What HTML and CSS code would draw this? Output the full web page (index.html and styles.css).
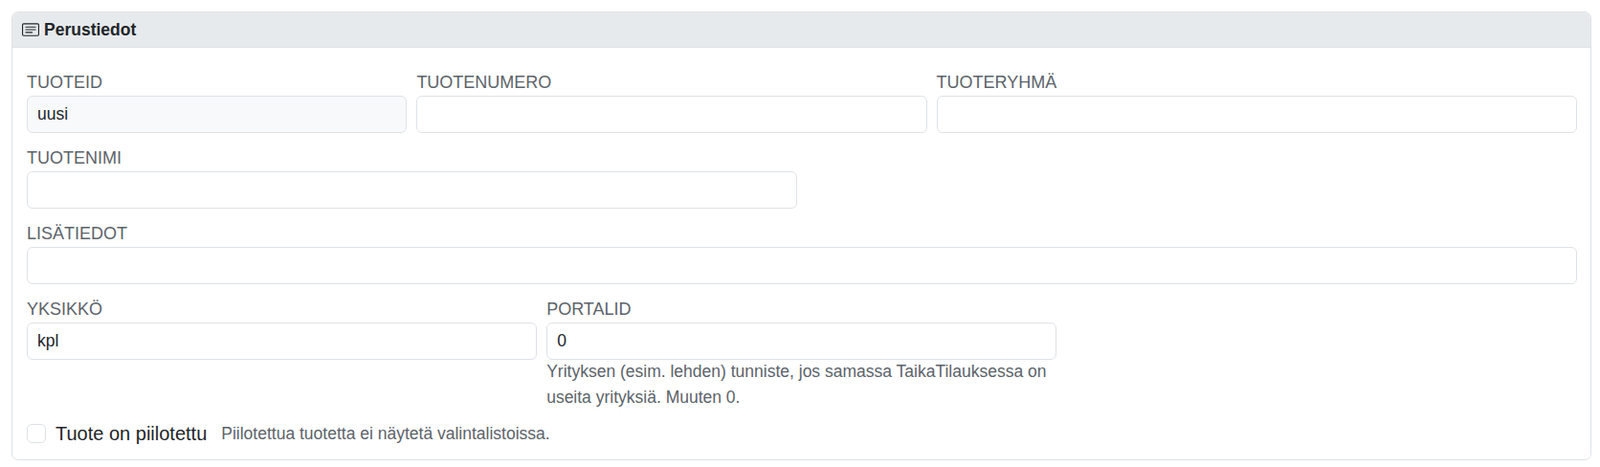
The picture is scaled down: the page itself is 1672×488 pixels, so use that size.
FILE: index.html
```html
<!DOCTYPE html>
<html lang="fi">
<head>
    <meta charset="UTF-8">
    <title>Perustiedot</title>
    <link rel="stylesheet" href="styles.css">
</head>
<body>
    <div class="card">
        <div class="card-header">
            <svg class="card-icon" viewBox="0 0 16 16" fill="currentColor">
                <path d="M14.5 3a.5.5 0 0 1 .5.5v9a.5.5 0 0 1-.5.5h-13a.5.5 0 0 1-.5-.5v-9a.5.5 0 0 1 .5-.5zm-13-1A1.5 1.5 0 0 0 0 3.5v9A1.5 1.5 0 0 0 1.5 14h13a1.5 1.5 0 0 0 1.5-1.5v-9A1.5 1.5 0 0 0 14.5 2z"/>
                <path d="M3 5.5a.5.5 0 0 1 .5-.5h9a.5.5 0 0 1 0 1h-9a.5.5 0 0 1-.5-.5M3 8a.5.5 0 0 1 .5-.5h9a.5.5 0 0 1 0 1h-9A.5.5 0 0 1 3 8m0 2.5a.5.5 0 0 1 .5-.5h6a.5.5 0 0 1 0 1h-6a.5.5 0 0 1-.5-.5"/>
            </svg>
            <span>Perustiedot</span>
        </div>
        <div class="card-body">
            <div class="form-row">
                <div class="field col-3">
                    <label class="field-label">TUOTEID</label>
                    <input class="field-input readonly" type="text" value="uusi" readonly>
                </div>
                <div class="field col-4">
                    <label class="field-label">TUOTENUMERO</label>
                    <input class="field-input" type="text">
                </div>
                <div class="field col-5">
                    <label class="field-label">TUOTERYHMÄ</label>
                    <input class="field-input" type="text">
                </div>
            </div>
            <div class="form-row">
                <div class="field col-6">
                    <label class="field-label">TUOTENIMI</label>
                    <input class="field-input" type="text">
                </div>
            </div>
            <div class="form-row">
                <div class="field col-12">
                    <label class="field-label">LISÄTIEDOT</label>
                    <input class="field-input" type="text">
                </div>
            </div>
            <div class="form-row">
                <div class="field col-4">
                    <label class="field-label">YKSIKKÖ</label>
                    <input class="field-input" type="text" value="kpl">
                </div>
                <div class="field col-4">
                    <label class="field-label">PORTALID</label>
                    <input class="field-input" type="text" value="0">
                    <div class="help-text">Yrityksen (esim. lehden) tunniste, jos samassa TaikaTilauksessa on useita yrityksiä. Muuten 0.</div>
                </div>
            </div>
            <div class="check-row">
                <input class="check-box" type="checkbox">
                <label class="check-label">Tuote on piilotettu</label>
                <span class="check-hint">Piilotettua tuotetta ei näytetä valintalistoissa.</span>
            </div>
        </div>
    </div>
</body>
</html>
```

FILE: styles.css
```css
body {
    margin: 0;
    padding: 12px 9px 0 12px;
    background: #fff;
    color: #212529;
    font-family: "Liberation Sans", Arial, sans-serif;
    font-size: 16px;
}

.card {
    border: 1px solid #dee2e6;
    border-radius: 7px;
    overflow: hidden;
}

.card-header {
    display: flex;
    align-items: center;
    gap: 5px;
    height: 36px;
    padding-left: 10px;
    background: #e7eaed;
    border-bottom: 1px solid #dee2e6;
    font-size: 17.5px;
    font-weight: bold;
}

.card-icon {
    width: 18px;
    height: 18px;
}

.card-body {
    padding: 19px 14.5px 12px 15px;
}

.form-row {
    display: grid;
    grid-template-columns: repeat(12, 1fr);
    column-gap: 10px;
    margin-bottom: 9.4px;
}

.col-3 { grid-column: span 3; }
.col-4 { grid-column: span 4; }
.col-5 { grid-column: span 5; }
.col-6 { grid-column: span 6; }
.col-12 { grid-column: span 12; }

.field-label {
    display: block;
    height: 31px;
    line-height: 35px;
    color: #5c636a;
    font-size: 18px;
}

.field-input {
    display: block;
    box-sizing: border-box;
    width: 100%;
    height: 38.6px;
    padding: 0 10px;
    border: 1px solid #dee2e6;
    border-radius: 6px;
    background: #fff;
    color: #212529;
    font-family: inherit;
    font-size: 17.5px;
}

.readonly {
    background: #f8f9fa;
}

.help-text {
    margin-top: -0.6px;
    color: #5c636a;
    font-size: 17.5px;
    line-height: 27px;
}

.check-row {
    display: flex;
    align-items: center;
    height: 29.6px;
}

.check-box {
    appearance: none;
    box-sizing: border-box;
    width: 20px;
    height: 20px;
    margin: 0 10px 0 0;
    border: 1px solid #dee2e6;
    border-radius: 5px;
    background: #fff;
}

.check-label {
    font-size: 20px;
    margin-right: 15px;
}

.check-hint {
    color: #5c636a;
    font-size: 17.5px;
}
```
